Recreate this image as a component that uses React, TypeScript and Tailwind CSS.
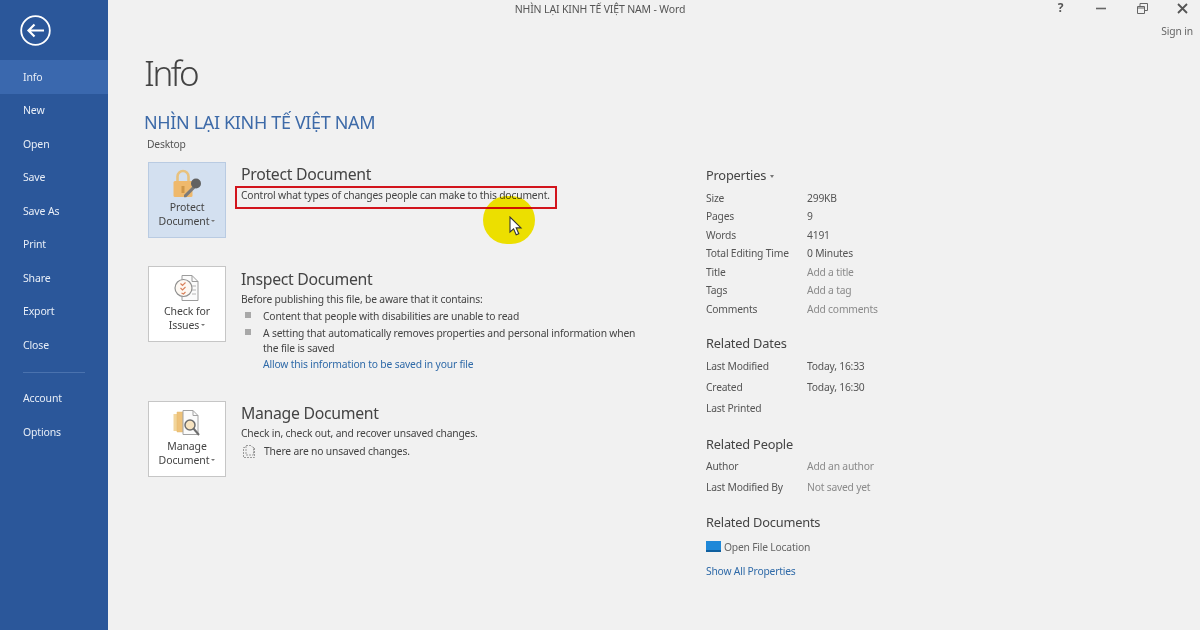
const navTop = ["New", "Open", "Save", "Save As", "Print", "Share", "Export", "Close"];
const navBottom = ["Account", "Options"];

function NavItem({ label, active }: { label: string; active?: boolean }) {
  return (
    <div className={`h-[33.5px] pt-[2px] flex items-center pl-[23px] text-[10.5px] tracking-[-0.15px] text-[#e8eef7] ${active ? "bg-[#3a68ae]" : ""}`}>
      {label}
    </div>
  );
}

function LockIcon() {
  return (
    <svg width="30" height="30" viewBox="0 0 30 30">
      <path d="M5.5 13V7.5a5.5 5.5 0 0 1 11 0V13" fill="none" stroke="#e8c27f" strokeWidth="2.6" />
      <rect x="1.5" y="12" width="19" height="16" rx="1.5" fill="#efb96c" />
      <rect x="9.5" y="17" width="3" height="7" fill="#cf9748" />
      <path d="M12 26l9-9 2.2 2.2-9 9h-2.2z" fill="#7b7b7b" />
      <circle cx="24" cy="14.5" r="5" fill="#626262" />
    </svg>
  );
}

function CheckIcon() {
  return (
    <svg width="28" height="28" viewBox="0 0 28 28">
      <path d="M9 1.5h10l6 6v19H9z" fill="#fbfbfb" stroke="#9c9c9c" />
      <path d="M19 1.5v6h6" fill="none" stroke="#9c9c9c" />
      <path d="M19 12h4M19 16h4M19 20h4" stroke="#b5b5b5" />
      <circle cx="10.5" cy="14" r="8.5" fill="#fdf8f2" stroke="#8f8f8f" strokeWidth="1.2" />
      <path d="M7.5 9.5l2 2 3-3M7.5 14l2 2 3-3M8.5 19l2 1 2-2" fill="none" stroke="#d9805a" strokeWidth="1.1" />
    </svg>
  );
}

function ManageIcon() {
  return (
    <svg width="28" height="28" viewBox="0 0 28 28">
      <path d="M0.5 5h9v17h-9z" fill="#f2d59b" />
      <path d="M4 3h10v20H4z" fill="#eec27a" stroke="#e6b96e" strokeWidth="0.5" />
      <path d="M10 1.5h10l5 5v19H10z" fill="#fbfbfb" stroke="#a2a2a2" />
      <path d="M20 1.5v5h5" fill="none" stroke="#a2a2a2" />
      <circle cx="17" cy="16" r="5" fill="#f7e3c0" stroke="#6d6d6d" strokeWidth="1.5" />
      <path d="M20.5 19.5l5.5 6.5" stroke="#6d6d6d" strokeWidth="2" />
    </svg>
  );
}

function ActionCard({ icon, top, bottom, active }: { icon: React.ReactNode; top: string; bottom: string; active?: boolean }) {
  return (
    <div className={`w-[78px] h-[76px] shrink-0 border flex flex-col items-center justify-end pb-[9px] text-[10.5px] leading-[14px] tracking-[-0.1px] text-[#444] ${active ? "bg-[#d3e0f0] border-[#b9cbe2]" : "bg-white border-[#c6c6c6]"}`}>
      <div className="h-[32px] flex items-center justify-center">{icon}</div>
      <div>{top}</div>
      <div className="flex items-center gap-[2px]">
        {bottom}
        <span className="w-0 h-0 border-x-[2px] border-t-[2px] border-x-transparent border-t-[#777]" />
      </div>
    </div>
  );
}

function PropRow({ label, value, muted, h }: { label: string; value: string; muted?: boolean; h: string }) {
  return (
    <div className={`flex items-center ${h}`}>
      <div className="w-[101px] text-[#555]">{label}</div>
      <div className={muted ? "text-[#8a8a8a]" : "text-[#555]"}>{value}</div>
    </div>
  );
}

export default function App() {
  return (
    <div className="w-[1200px] h-[630px] relative flex overflow-hidden bg-[#f1f1f1] font-['Noto_Sans',sans-serif]">
      <aside className="w-[108px] shrink-0 bg-[#2b579a] flex flex-col">
        <div className="h-[60px] pl-[20px] flex items-center">
          <svg width="31" height="31" viewBox="0 0 31 31" fill="none" stroke="white">
            <circle cx="15.5" cy="15.5" r="14.3" strokeWidth="1.8" />
            <path d="M24 15.5H9M14.5 9.5l-6 6 6 6" strokeWidth="2.2" />
          </svg>
        </div>
        <NavItem label="Info" active />
        {navTop.map((n) => (
          <NavItem key={n} label={n} />
        ))}
        <div className="mx-[23px] mt-[10px] mb-[9px] h-px bg-[#4a72ae]" />
        {navBottom.map((n) => (
          <NavItem key={n} label={n} />
        ))}
      </aside>

      <main className="flex-1 flex flex-col text-[#444]">
        <header className="h-[19px] pr-[108px] flex items-center justify-center text-[10.5px] tracking-[-0.15px] text-[#555]">
          NHÌN LẠI KINH TẾ VIỆT NAM - Word
        </header>

        <div className="pl-[36px] mt-[30px]">
          <h1 className="text-[35px] leading-[48px] font-light tracking-[-2.5px] text-[#444]">Info</h1>
          <div className="mt-[12px] text-[18px] leading-[26px] tracking-[-0.35px] text-[#3d6aa8]">NHÌN LẠI KINH TẾ VIỆT NAM</div>
          <div className="mt-[1px] pl-[3px] text-[10.3px] leading-[16px] tracking-[-0.2px] text-[#555]">Desktop</div>
        </div>

        <div className="pl-[40px] mt-[10px] flex">
          <div className="w-[558px] shrink-0 flex flex-col text-[10.3px] leading-[15.5px] tracking-[-0.17px]">
            <section className="flex gap-[15px] h-[104px]">
              <ActionCard icon={<LockIcon />} top="Protect" bottom="Document" active />
              <div>
                <h2 className="text-[15.8px] leading-[24px] tracking-[-0.3px] text-[#444]">Protect Document</h2>
                <p className="-ml-[6px] w-[322px] h-[23px] border-2 border-[#d2141c] pl-[4px] leading-[14px] text-[#444]">
                  Control what types of changes people can make to this document.
                </p>
              </div>
            </section>

            <section className="flex gap-[15px] h-[135px]">
              <ActionCard icon={<CheckIcon />} top="Check for" bottom="Issues" />
              <div>
                <h2 className="mt-px text-[15.8px] leading-[24px] tracking-[-0.3px] mb-[1px]">Inspect Document</h2>
                <p>Before publishing this file, be aware that it contains:</p>
                <ul className="mt-[1px]">
                  <li className="flex gap-[12px] items-start">
                    <span className="ml-[4px] mt-[3px] w-[6px] h-[6px] shrink-0 bg-[#a8a8a8]" />
                    Content that people with disabilities are unable to read
                  </li>
                  <li className="flex gap-[12px] items-start mt-[1.5px]">
                    <span className="ml-[4px] mt-[3px] w-[6px] h-[6px] shrink-0 bg-[#a8a8a8]" />
                    <span className="w-[380px]">A setting that automatically removes properties and personal information when the file is saved</span>
                  </li>
                </ul>
                <a className="block ml-[22px] text-[#2f6aa8]">Allow this information to be saved in your file</a>
              </div>
            </section>

            <section className="flex gap-[15px]">
              <ActionCard icon={<ManageIcon />} top="Manage" bottom="Document" />
              <div>
                <h2 className="text-[15.8px] leading-[24px] tracking-[-0.3px] mb-[1px]">Manage Document</h2>
                <p>Check in, check out, and recover unsaved changes.</p>
                <div className="flex items-center gap-[7px] mt-[2px] ml-px">
                  <svg width="15" height="15" viewBox="0 0 15 15" fill="none" stroke="#9a9a9a">
                    <path d="M3 3.5H1.5v10h11v-10H11" strokeDasharray="2 1" />
                    <path d="M4 1.5h5l2.5 2.5v7H4z" strokeDasharray="2 1" />
                  </svg>
                  There are no unsaved changes.
                </div>
              </div>
            </section>
          </div>

          <div className="text-[10.3px] tracking-[-0.2px] flex flex-col">
            <h3 className="h-[26px] pt-[2px] flex items-center gap-[4px] text-[12.8px] text-[#444]">
              Properties
              <span className="w-0 h-0 border-x-[2.5px] border-t-[3px] border-x-transparent border-t-[#777]" />
            </h3>
            <div className="mt-[1px]">
              <PropRow h="h-[18.5px]" label="Size" value="299KB" />
              <PropRow h="h-[18.5px]" label="Pages" value="9" />
              <PropRow h="h-[18.5px]" label="Words" value="4191" />
              <PropRow h="h-[18.5px]" label="Total Editing Time" value="0 Minutes" />
              <PropRow h="h-[18.5px]" label="Title" value="Add a title" muted />
              <PropRow h="h-[18.5px]" label="Tags" value="Add a tag" muted />
              <PropRow h="h-[18.5px]" label="Comments" value="Add comments" muted />
            </div>
            <h3 className="mt-[14px] h-[22px] flex items-center text-[12.8px] text-[#444]">Related Dates</h3>
            <div className="mt-[2px]">
              <PropRow h="h-[21px]" label="Last Modified" value="Today, 16:33" />
              <PropRow h="h-[21px]" label="Created" value="Today, 16:30" />
              <PropRow h="h-[21px]" label="Last Printed" value="" />
            </div>
            <h3 className="mt-[14px] h-[22px] flex items-center text-[12.8px] text-[#444]">Related People</h3>
            <div className="mt-px">
              <PropRow h="h-[21px]" label="Author" value="Add an author" muted />
              <PropRow h="h-[21px]" label="Last Modified By" value="Not saved yet" muted />
            </div>
            <h3 className="mt-[13px] h-[22px] flex items-center text-[12.8px] text-[#444]">Related Documents</h3>
            <div className="mt-[2px] h-[24px] flex items-center text-[#666]">
              <span className="w-[15px] h-[11px] mt-[-2px] mr-[3px] bg-[#1f88d8] border-b-2 border-[#0f5f9f]" />
              Open File Location
            </div>
            <a className="mt-[3px] h-[18px] flex items-center text-[#2f6aa8]">Show All Properties</a>
          </div>
        </div>
      </main>

      {/* window buttons */}
      <div className="absolute top-0 right-0 w-[156px] h-[40px] text-[#555]">
        <div className="flex items-center h-[16px]">
          <span className="w-[33px] text-center text-[12px] font-bold">?</span>
          <svg className="ml-[19px]" width="10" height="10" viewBox="0 0 10 10"><path d="M0 5.5h10" stroke="#666" strokeWidth="1.6" /></svg>
          <svg className="ml-[31px]" width="11" height="11" viewBox="0 0 11 11" fill="none" stroke="#666"><path d="M0.5 3.5h7v7h-7zM3 3.5v-3h7.5v7H7.5M0.5 5h7" /></svg>
          <svg className="ml-[29px]" width="11" height="11" viewBox="0 0 11 11"><path d="M1 1l9 9M10 1l-9 9" stroke="#555" strokeWidth="1.8" /></svg>
        </div>
        <div className="mt-[8px] pr-[7px] text-right text-[10.3px] tracking-[-0.15px] text-[#666]">Sign in</div>
      </div>

      {/* highlighted mouse pointer */}
      <div className="absolute left-[483px] top-[196px] w-[52px] h-[48px] rounded-full bg-[#faec00] mix-blend-multiply" />
      <svg className="absolute left-[509px] top-[216px]" width="14" height="20" viewBox="0 0 14 20">
        <path d="M1 1v15l3.6-3.2 2.6 6 2.6-1.1-2.6-5.8h4.8z" fill="white" stroke="#333" strokeWidth="1.1" />
      </svg>
    </div>
  );
}
